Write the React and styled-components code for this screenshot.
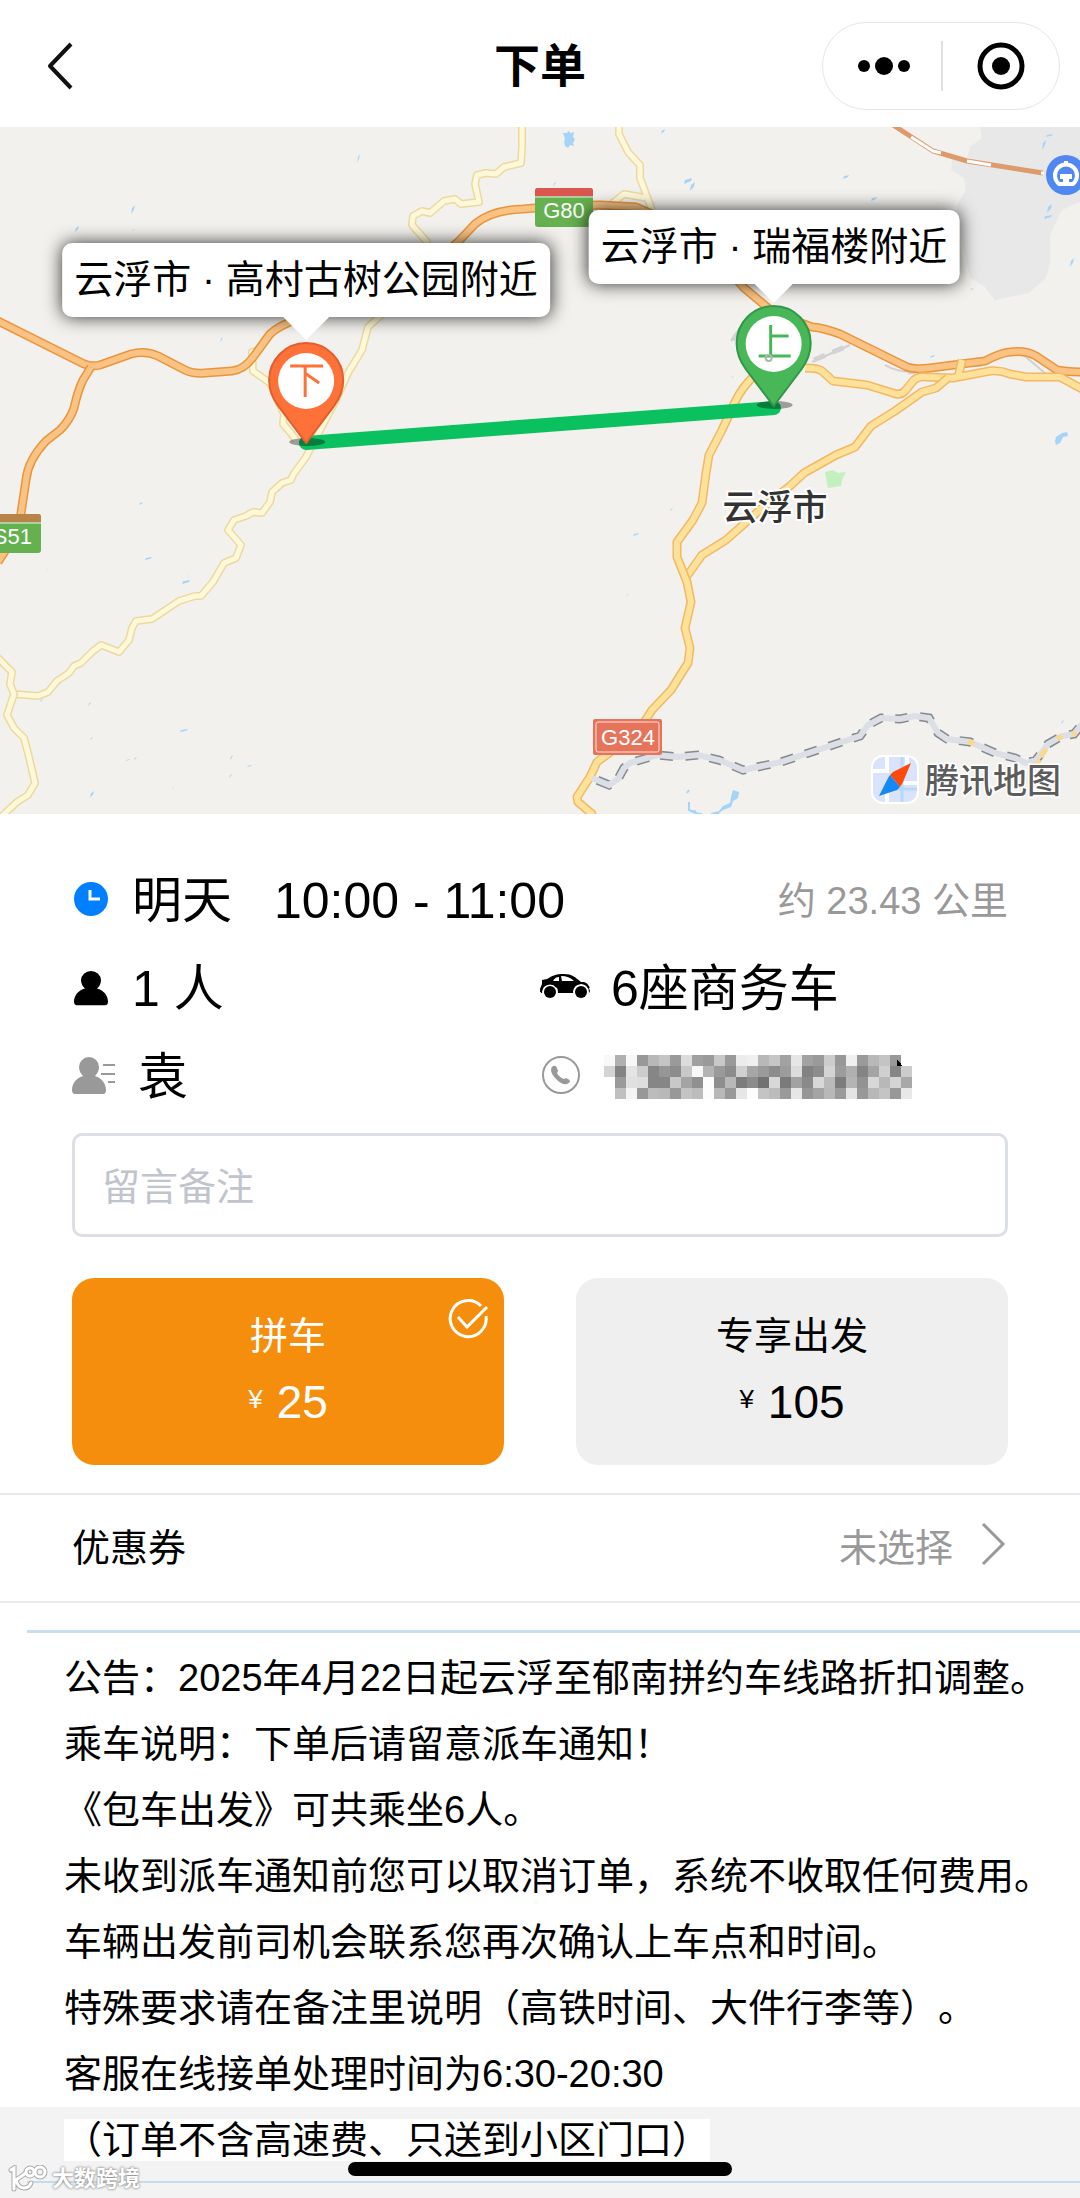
import React, { useState } from "react";
import styled, { createGlobalStyle } from "styled-components";

const GlobalStyle = createGlobalStyle`
  body {
    margin: 0;
    background: #fff;
    color: #000;
    font-family: "Liberation Sans", "Noto Sans CJK SC", sans-serif;
  }

  button, input {
    font-family: inherit;
    color: inherit;
  }

  button {
    padding: 0;
    border: 0;
    background: none;
  }

  svg {
    display: block;
    flex: none;
  }
`;

const Page = styled.div`
  overflow: hidden;
`;

/* ---------- header ---------- */

const Header = styled.header`
  display: grid;
  grid-template-columns: 1fr auto 1fr;
  align-items: center;
  box-sizing: border-box;
  height: 127px;
  padding: 5px 20px 0;
`;

const BackButton = styled.button`
  justify-self: start;
  padding: 4px 26px;
`;

const Title = styled.h1`
  margin: 0;
  font-size: 46px;
  font-weight: 600;
  line-height: 66px;
`;

const Capsule = styled.div`
  justify-self: end;
  display: flex;
  align-items: center;
  height: 86px;
  border: 1px solid #e6e6e6;
  border-radius: 44px;
`;

const CapsuleButton = styled.button`
  display: flex;
  align-items: center;
  justify-content: center;
  width: 118px;
  height: 50px;

  & + & {
    border-left: 2px solid #e0e0e0;
  }
`;

/* ---------- map ---------- */

const MapBox = styled.section`
  position: relative;
  height: 687px;
  overflow: hidden;
  background: #f2f1ed;
`;

const MapSvg = styled.svg`
  width: 100%;
  height: 100%;
  font-family: "Liberation Sans", "Noto Sans CJK SC", sans-serif;
`;

const Marker = styled.div`
  position: absolute;
  left: calc(50% + ${(p) => p.$x}px);
  bottom: calc(100% - ${(p) => p.$y}px);
  transform: translateX(-50%);
  display: flex;
  flex-direction: column;
  align-items: center;
`;

const Callout = styled.div`
  padding: 0 12px;
  border-radius: 10px;
  background: #fff;
  box-shadow: 0 0 18px rgba(0, 0, 0, 0.8);
  font-size: 39px;
  line-height: 74px;
  white-space: pre;
`;

const CalloutArrow = styled.div`
  position: relative;
  border: solid transparent;
  border-width: ${(p) => p.$size}px ${(p) => p.$size}px 0;
  border-top-color: #fff;
  margin-bottom: 2px;
`;

const Pin = styled.svg`
  width: 78px;
  height: 106px;
  margin-bottom: -5px;
`;

/* ---------- order form ---------- */

const Form = styled.form`
  padding: 43px 72px 28px;
`;

const InfoRow = styled.div`
  display: grid;
  grid-template-columns: ${(p) => (p.$wide ? "1fr auto" : "1fr 1fr")};
  align-items: center;
  height: 88px;
`;

const InfoCell = styled.div`
  display: flex;
  align-items: center;
  gap: ${(p) => p.$gap || 24}px;
  font-size: 50px;
  line-height: 88px;
  white-space: nowrap;
`;

const TimeRange = styled.span`
  margin-left: 18px;
`;

const Distance = styled.span`
  color: #999;
  font-size: 38px;
  line-height: 66px;
`;

const Remark = styled.input`
  display: block;
  box-sizing: border-box;
  width: 100%;
  height: 104px;
  margin-top: 12px;
  padding: 4px 27px 0;
  border: 3px solid #dcdfe6;
  border-radius: 10px;
  font-size: 38px;
  outline: none;

  &::placeholder {
    color: #c0c4cc;
    opacity: 1;
  }
`;

const Fares = styled.div`
  display: grid;
  grid-template-columns: 1fr 1fr;
  gap: 72px;
  margin-top: 41px;
`;

const FareCard = styled.label`
  position: relative;
  display: flex;
  flex-direction: column;
  align-items: center;
  height: 159px;
  padding-top: 28px;
  border-radius: 22px;
  background: ${(p) => (p.$active ? "#f68e0d" : "#efefef")};
  color: ${(p) => (p.$active ? "#fff" : "#000")};
`;

const FareRadio = styled.input`
  position: absolute;
  opacity: 0;
`;

const FareName = styled.span`
  font-size: 38px;
  line-height: 60px;
`;

const FarePrice = styled.span`
  display: flex;
  align-items: center;
  gap: 14px;
  font-size: 46px;
  line-height: 72px;
`;

const Yen = styled.small`
  font-size: 26px;
  line-height: 66px;
  align-self: flex-start;
`;

const CheckMark = styled.svg`
  position: absolute;
  top: 21px;
  right: 15px;
`;

/* ---------- coupon ---------- */

const CouponRow = styled.button`
  display: flex;
  align-items: center;
  justify-content: space-between;
  box-sizing: border-box;
  width: 100%;
  height: 110px;
  padding: 0 74px 0 72px;
  border-top: 2px solid #e8e9ef;
  border-bottom: 2px solid #ebebeb;
  font-size: 38px;
  line-height: 66px;
`;

const CouponValue = styled.span`
  display: flex;
  align-items: center;
  gap: 28px;
  color: #999;
`;

const Arrow = styled.svg`
  margin-bottom: 8px;
`;

/* ---------- notice ---------- */

const Notice = styled.section`
  margin: 27px 0 0 27px;
  padding: 12px 0 0 37px;
  border-top: 3px solid #c9dfed;
  font-size: 38px;
`;

const Line = styled.p`
  margin: 0;
  line-height: 66px;
  white-space: nowrap;
  text-spacing-trim: space-all;
`;

const Footer = styled.footer`
  position: relative;
  height: 91px;
  background: #f3f3f3;
`;

const FooterNotice = styled.div`
  margin-left: 27px;
  padding: 0 0 8px 37px;
  border-bottom: 2px solid #c3dcee;
  font-size: 38px;
`;

const Highlight = styled.span`
  background: #fff;
`;

const HomeBar = styled.div`
  position: absolute;
  left: 50%;
  top: 55px;
  width: 384px;
  height: 14px;
  margin-left: -192px;
  border-radius: 7px;
  background: #000;
`;

const Watermark = styled.div`
  position: absolute;
  left: 8px;
  top: 54px;
  display: flex;
  align-items: center;
  gap: 4px;
  color: #fff;
  font-size: 22px;
  line-height: 36px;
  font-weight: 600;
  text-shadow: 0 0 3px #888, 0 0 2px #999;
`;

/* every road is a dark casing with a lighter line on top */
const ROAD_STYLES = {
  cream: { casing: "#ecd9a0", fill: "#fef8da", w: 8, inner: 5 },
  yellow: { casing: "#f2b866", fill: "#ffe29a", w: 9, inner: 6 },
  orange: { casing: "#e7963f", fill: "#fac384", w: 9, inner: 6 },
};

const ROADS = [
  ["cream", "M522 120V147L521 163 504 167 496 174 486 173 477 175 475 184 479 202 461 204 455 199 444 201 430 213 422 211 413 216 412 225 427 242 420 262 379 317 368 327 362 350 348 373 336 400 320 430 306 457 293 475 291 480 282 483 272 492 270 502 262 513 253 512 246 516 234 520 228 530 241 545 236 558 224 563 213 582 201 596 195 596 179 601 152 619 136 621 132 628 129 640 124 646 119 652 101 645 92 652 81 663 74 666 69 673 57 681 48 692 38 696 14 694"],
  ["cream", "M-4 656 12 672 10 684 14 694 7 715 14 728 24 738 28 753 35 783 28 795 17 802 2 816"],
  ["cream", "M259 350 252 352 253 371 270 383 284 414 283 424 290 432 296 440"],
  ["cream", "M619 120V134L628 152 640 165V178L652 210M609 206 624 194 646 198"],
  ["orange", "M-4 320 84 364Q92 367 100 365L131 354Q145 350 158 356L185 370Q193 374 205 373L232 371Q244 370 254 356L270 334Q278 326 300 318L400 290 458 242 475 224Q492 210 523 209L560 206 600 205 636 207 700 235 743 287 774 313 812 327Q824 328 840 334L905 366Q912 370 930 368L985 361Q1000 353 1010 352 1026 350 1036 356L1057 370Q1066 372 1084 372"],
  ["orange", "M91 367 83 380Q78 390 74 408 70 420 60 430L46 441Q28 460 26 480L20 520Q12 542 -2 562"],
  ["yellow", "M962 360 958 378M805 368Q818 368 822 371L833 381 867 385 893 393Q900 396 905 391L914 380Q919 376 926 377L953 378 990 371Q1000 370 1010 374L1026 377H1060L1084 390"],
  ["yellow", "M948 378 936 388 922 392 895 411 871 426 855 447 836 455 804 473 790 486 762 508 726 540 702 555 687 576"],
  ["yellow", "M752 378Q742 388 736 400L722 430 709 455 706 473 702 503 693 520 677 542V557L687 582 691 602 685 628 690 648 688 663 671 690 652 710 643 724 620 745 597 762 590 777 577 797 578 802 592 814V820"],
];

const RAIL =
  "M592 778 609 785 618 779 624 768 630 763 657 755 678 757 698 755 719 760 743 770 781 762 860 736 868 725 881 718 900 719 915 716 929 718 938 733 947 739 970 742 995 753 1015 758 1026 763 1036 760 1048 744 1062 736 1074 734 1084 722";

const CITY =
  "M979 120 982 138 970 147 967 158 952 160 951 170 964 178 966 190 957 205 962 240 970 278 984 286 995 300 1029 293 1046 278 1050 262 1050 235 1062 210 1084 200V120Z";

// small lakes and ponds: [x, y, w, h]
const PONDS = [
  [357, 154, 3, 9], [131, 205, 4, 9], [75, 226, 4, 6], [132, 229, 3, 2], [220, 337, 3, 5],
  [139, 502, 4, 3], [145, 557, 7, 3], [182, 580, 8, 4], [187, 574, 2, 5], [46, 568, 2, 5],
  [40, 699, 3, 3], [88, 702, 3, 4], [90, 737, 3, 3], [180, 729, 8, 3], [126, 759, 4, 2],
  [134, 757, 3, 3], [230, 755, 3, 5], [247, 765, 5, 2], [229, 774, 3, 4], [172, 786, 2, 4],
  [90, 791, 4, 7], [661, 129, 4, 5], [684, 178, 8, 6], [690, 182, 5, 9], [843, 175, 6, 4],
  [871, 197, 6, 4], [553, 182, 3, 4], [930, 355, 5, 3], [1070, 258, 4, 9], [970, 288, 4, 2],
  [633, 533, 6, 3], [670, 508, 3, 3], [626, 594, 3, 2], [1061, 720, 3, 4], [1047, 204, 5, 9],
  [1044, 215, 8, 4], [1042, 140, 4, 10], [1046, 134, 7, 3], [731, 376, 3, 2],
];

// shades of the mosaic drawn over the phone number
const MOSAIC = [
  "f8 b0 f8 98 b8 c4 9a dc a0 9a c8 9a ec f0 b8 c6 a2 e6 a2 9a cc 98 f0 9a b8 c4 98 ff",
  "d4 84 e4 cc 86 96 8c c8 f8 b4 9a 8c d0 a6 9a 8c 9c dc 82 8c d4 9c b0 84 a4 d0 86 cc",
  "ff 9a e0 de 86 86 c8 a4 90 fc 8e b8 7c 8c 72 d8 7a a2 8a d8 ba 7c b4 92 d8 b8 d4 a8",
  "ff c0 f4 98 bc b8 98 c4 bc fc b8 98 e6 fc c4 bc 9a e6 96 a4 b8 9a e4 98 b8 c4 98 e8",
].map((row) => row.split(" "));

const FARES = [
  { id: "share", name: "拼车", price: 25 },
  { id: "private", name: "专享出发", price: 105 },
];

const NOTICE_LINES = [
  "公告：2025年4月22日起云浮至郁南拼约车线路折扣调整。",
  "乘车说明：下单后请留意派车通知！",
  "《包车出发》可共乘坐6人。",
  "未收到派车通知前您可以取消订单，系统不收取任何费用。",
  "车辆出发前司机会联系您再次确认上车点和时间。",
  "特殊要求请在备注里说明（高铁时间、大件行李等）。",
  "客服在线接单处理时间为6:30-20:30",
];

function Road({ type, d }) {
  const s = ROAD_STYLES[type];
  return (
    <g fill="none" strokeLinejoin="round">
      <path d={d} stroke={s.casing} strokeWidth={s.w} />
      <path d={d} stroke={s.fill} strokeWidth={s.inner} />
    </g>
  );
}

function Map() {
  return (
    <MapSvg viewBox="0 127 1080 687" preserveAspectRatio="xMidYMid slice">
      <path d={CITY} fill="#e8e8e8" />
      <g fill="#a5d4f8">
        {PONDS.map(([x, y, w, h]) => (
          <path key={`${x}-${y}`} d={`M${x + w} ${y}L${x + w - 1} ${y + h / 2} ${x} ${y + h} ${x + 1} ${y + h / 3}Z`} />
        ))}
        <path d="M563 133h4l1-2 3 2 3-1-1 5 2 2-2 4 1 3-4-1-2 3-3-2-1-4 1-3z" />
        <path d="M1056 437l6-4 5-1 1 4-5 1-3 6-4 2-1-4z" />
        <path d="M733 790l6 2-1 6-5 3-2 6-8 3-4 3 1 3-4 4-3 5h-5l4-8-1-4 8-2 4-5 7-3 1-6z" />
      </g>
      <path d="M689 802v8q6 4 13 4M689 810q4 2 7 1M689 790l-2 3" fill="none" stroke="#a5d4f8" strokeWidth="2" />
      <path d="M825 472l8-2 5 3 8-1-4 8-1 6-13 2z" fill="#c4f0c0" />

      <path d="M731 341 756 310M812 362 850 345M885 365Q900 374 920 371L950 366H980L1004 354Q1014 350 1026 357L1046 374" fill="none" stroke="#d0d0d4" strokeWidth="2" />
      <path d="M733 340 752 314M814 360 845 347M908 372 946 367" fill="none" stroke="#d3d3d6" strokeWidth="5" strokeDasharray="12 8" />
      {ROADS.map(([type, d]) => (
        <Road key={d} type={type} d={d} />
      ))}
      <g fill="none">
        <path d="M893 125 933 151 967 161 1043 173" stroke="#dd9b6c" strokeWidth="5" />
        <path d="M911 137 933 151 941 153M967 161 991 165M1041 173h3" stroke="#fff" strokeWidth="3" />
        <path d={RAIL} stroke="#dcdfe6" strokeWidth="5" />
        <path d={RAIL} stroke="#858990" strokeWidth="9" strokeDasharray="13 12" strokeDashoffset="-6" />
        <path d={RAIL} stroke="#dcdfe6" strokeWidth="6" />
        <path d="M968 741l6 3M1034 768l6-8M1041 757l5-8M1057 739l5-3M1072 735l4-2" stroke="#fbd98c" strokeWidth="5" />
      </g>

      {/* road shields */}
      <rect x="535" y="188" width="58" height="39" rx="3" fill="#65b04f" />
      <path d="M535 196v-5q0-3 3-3h52q3 0 3 3v5z" fill="#dc5650" />
      <path d="M535 197h58" stroke="#f2f1ed" />
      <text x="564" y="218" fontSize="22" fill="#fff" textAnchor="middle">G80</text>
      <rect x="-14" y="514" width="55" height="39" rx="3" fill="#65b04f" />
      <path d="M-14 522v-8h52q3 0 3 3v5z" fill="#b88449" />
      <path d="M-14 523h55" stroke="#f2f1ed" />
      <text x="32" y="544" fontSize="22" fill="#fff" textAnchor="end">S51</text>
      <rect x="593" y="719" width="69" height="36" rx="2" fill="#e6745b" />
      <rect x="596" y="722" width="63" height="30" rx="2" fill="none" stroke="#fff" strokeOpacity="0.8" />
      <text x="628" y="745" fontSize="22" fill="#fff" textAnchor="middle">G324</text>

      {/* railway station */}
      <circle cx="1066" cy="175" r="20" fill="#5087f0" />
      <path d="M1059 184a11 11 0 1 1 14 0M1066 161v4" fill="none" stroke="#fff" strokeWidth="4" />
      <path d="M1060 174h12v5h-3v3h5v4h-16v-4h5v-3h-3z" fill="#fff" />

      <text x="775" y="520" fontSize="35" fontWeight="500" fill="#333" textAnchor="middle" stroke="#fff" strokeWidth="4" paintOrder="stroke">
        云浮市
      </text>

      {/* map provider */}
      <rect x="871" y="755" width="48" height="49" rx="12" fill="#fff" />
      <rect x="873" y="757" width="44" height="45" rx="10" fill="#d9e4fc" />
      <path d="M887 757v16M873 771h14M887 790v12M907 757v8M900 783h17" stroke="#fff" strokeWidth="4" />
      <path d="M902 757v45M887 789h30" stroke="#b6d8fb" strokeWidth="3" />
      <path d="M911 763 893 772 890 775 900 787 903 782z" fill="#fb4a0c" />
      <path d="M879 796 888 778 890 775 900 787 897 790z" fill="#1488f5" />
      <text x="925" y="793" fontSize="34" fontWeight="500" fill="#5c5c5c" stroke="#fff" strokeWidth="3" paintOrder="stroke">
        腾讯地图
      </text>

      <path d="M306 443 774 408" stroke="#0bc15f" strokeWidth="14" strokeLinecap="round" />
    </MapSvg>
  );
}

function MapPin({ color, edge, children }) {
  return (
    <Pin viewBox="0 0 78 106">
      <ellipse cx="40" cy="100" rx="18" ry="4" fill="#000" fillOpacity="0.35" />
      <path d="M39 1a37 37 0 0 1 37 38c0 10-4 18-9 25L39 101 11 64C6 57 2 49 2 39A37 37 0 0 1 39 1z" fill={color} stroke={edge} strokeWidth="2" />
      <circle cx="39" cy="39" r="28" fill="#fff" />
      <g fill="none" stroke={color} strokeWidth="3">{children}</g>
    </Pin>
  );
}

function CarIcon() {
  return (
    <svg width="51" height="32" viewBox="0 0 51 32">
      <path d="M2 7l5-1C12 3 15 1 24 1c8 0 11 3 17 8 4 0 6 1 7 3l2 6-1 2H1L0 16l2-5z" />
      <path d="M13 8q2-4 6-4v4zM21 3q8 0 13 5H22z" fill="#fff" />
      <circle cx="10" cy="19" r="8" fill="#fff" />
      <circle cx="41" cy="19" r="8" fill="#fff" />
      <circle cx="10" cy="19" r="6" />
      <circle cx="41" cy="19" r="6" />
      <path d="M1 19a9 9 0 0 1 16-5M32 18a9 9 0 0 1 17-3" fill="none" stroke="#000" strokeWidth="2" />
    </svg>
  );
}

function PersonIcon({ list }) {
  return (
    <svg
      width={list ? 44 : 36}
      height={list ? 42 : 40}
      viewBox={list ? "0 0 44 42" : "-2 0 36 40"}
      fill={list ? "#999" : "#000"}
    >
      <path
        transform={list ? undefined : "translate(0 1) scale(1 0.93)"}
        d="M17 1a10 10 0 0 1 10 10c0 4-2 7-4 9 7 2 11 8 11 14q0 4-3 4H3q-3 0-3-4c0-6 4-12 11-14-2-2-4-5-4-9A10 10 0 0 1 17 1z"
      />
      {list && <path d="M31 9h12M29 18h14M36 26h7" stroke="#999" strokeWidth="2" />}
    </svg>
  );
}

function PhoneIcon() {
  return (
    <svg width="42" height="42" viewBox="-2 0 42 42">
      <circle cx="19" cy="19" r="18" fill="none" stroke="#999" strokeWidth="2" />
      <path d="M11 10q3-1 4 2l1 3-1 2q2 4 7 6l2-1q3 1 4 3 0 2-3 3-5 1-10-4-6-6-6-10 0-3 2-4z" fill="#999" />
    </svg>
  );
}

function MaskedPhone() {
  return (
    <svg width="308" height="44" viewBox="0 0 308 44" role="img" shapeRendering="crispEdges">
      {MOSAIC.map((row, y) =>
        row.map((c, x) => (
          <rect key={`${x}-${y}`} x={x * 11} y={y * 11} width="11" height="11" fill={`#${c}${c}${c}`} />
        ))
      )}
      <path d="M293 5l3 2 2 4h-5z" />
    </svg>
  );
}

export default function App() {
  const [fare, setFare] = useState("share");
  const [remark, setRemark] = useState("");

  return (
    <Page>
      <GlobalStyle />

      <Header>
        <BackButton aria-label="返回">
          <svg width="28" height="50" viewBox="0 0 28 50" fill="none" stroke="#111" strokeWidth="4">
            <path d="M25 3 4 25 25 47" strokeLinejoin="round" />
          </svg>
        </BackButton>
        <Title>下单</Title>
        <Capsule>
          <CapsuleButton aria-label="更多">
            <svg width="60" height="20" viewBox="-4 0 60 20">
              <circle cx="8" cy="10" r="6" />
              <circle cx="28" cy="10" r="9" />
              <circle cx="48" cy="10" r="6" />
            </svg>
          </CapsuleButton>
          <CapsuleButton aria-label="关闭">
            <svg width="50" height="50" viewBox="0 0 50 50">
              <circle cx="25" cy="25" r="21" fill="none" stroke="#000" strokeWidth="5" />
              <circle cx="25" cy="25" r="9" />
            </svg>
          </CapsuleButton>
        </Capsule>
      </Header>

      <MapBox>
        <Map />
        <Marker $x={-234} $y={316}>
          <Callout>云浮市 · 高村古树公园附近</Callout>
          <CalloutArrow $size={23} />
          <MapPin color="#fe7138" edge="#e05f2b">
            <path d="M23 24h33M38 24v31M39 32l13 9" />
          </MapPin>
        </Marker>
        <Marker $x={234} $y={279}>
          <Callout>云浮市 · 瑞福楼附近</Callout>
          <CalloutArrow $size={19} />
          <MapPin color="#47b757" edge="#33964a">
            <path d="M36 20v31M36 31h18M24 51h32" />
            <circle cx="34" cy="53" r="3" stroke="#a9b8a9" strokeWidth="2" />
          </MapPin>
        </Marker>
      </MapBox>

      <Form onSubmit={(e) => e.preventDefault()}>
        <InfoRow $wide>
          <InfoCell>
            <svg width="36" height="40" viewBox="-2 0 36 40">
              <circle cx="17" cy="18" r="17" fill="#007fff" />
              <path d="M16 9v9h10" fill="none" stroke="#fff" strokeWidth="3" />
            </svg>
            明天
            <TimeRange>10:00 - 11:00</TimeRange>
          </InfoCell>
          <Distance>约 23.43 公里</Distance>
        </InfoRow>
        <InfoRow>
          <InfoCell>
            <PersonIcon />1 人
          </InfoCell>
          <InfoCell $gap={20}>
            <CarIcon />
            6座商务车
          </InfoCell>
        </InfoRow>
        <InfoRow>
          <InfoCell $gap={22}>
            <PersonIcon list />袁
          </InfoCell>
          <InfoCell $gap={22}>
            <PhoneIcon />
            <MaskedPhone />
          </InfoCell>
        </InfoRow>

        <Remark
          aria-label="留言备注"
          placeholder="留言备注"
          value={remark}
          onChange={(e) => setRemark(e.target.value)}
        />

        <Fares>
          {FARES.map((f) => (
            <FareCard key={f.id} $active={fare === f.id}>
              <FareRadio type="radio" name="fare" checked={fare === f.id} onChange={() => setFare(f.id)} />
              <FareName>{f.name}</FareName>
              <FarePrice>
                <Yen>¥</Yen>
                {f.price}
              </FarePrice>
              {fare === f.id && (
                <CheckMark width="41" height="41" viewBox="0 0 41 41" fill="none" stroke="#fff" strokeWidth="3">
                  <path d="M33 7A18 18 0 1 0 38 17" />
                  <path d="M10 18l9 10L39 8" />
                </CheckMark>
              )}
            </FareCard>
          ))}
        </Fares>
      </Form>

      <CouponRow type="button">
        <span>优惠券</span>
        <CouponValue>
          未选择
          <Arrow width="25" height="44" viewBox="0 0 25 44" fill="none" stroke="#999" strokeWidth="3">
            <path d="M2 2 22 22 2 42" />
          </Arrow>
        </CouponValue>
      </CouponRow>

      <Notice>
        {NOTICE_LINES.map((line) => (
          <Line key={line}>{line}</Line>
        ))}
      </Notice>

      <Footer>
        <FooterNotice>
          <Line>
            <Highlight>（订单不含高速费、只送到小区门口）</Highlight>
          </Line>
        </FooterNotice>
        <HomeBar />
        <Watermark>
          <svg width="40" height="28" viewBox="0 0 40 28" fill="none" strokeLinecap="round">
            <g stroke="#aaa" strokeWidth="5">
              <path d="M3 5l3-2v21M18 8 8 15q2 8 8 8 5 0 7-5" />
              <circle cx="22" cy="7" r="4" />
              <circle cx="32" cy="7" r="5" />
            </g>
            <g stroke="#fff" strokeWidth="3">
              <path d="M3 5l3-2v21M18 8 8 15q2 8 8 8 5 0 7-5" />
              <circle cx="22" cy="7" r="4" />
              <circle cx="32" cy="7" r="5" />
            </g>
          </svg>
          大数跨境
        </Watermark>
      </Footer>
    </Page>
  );
}
